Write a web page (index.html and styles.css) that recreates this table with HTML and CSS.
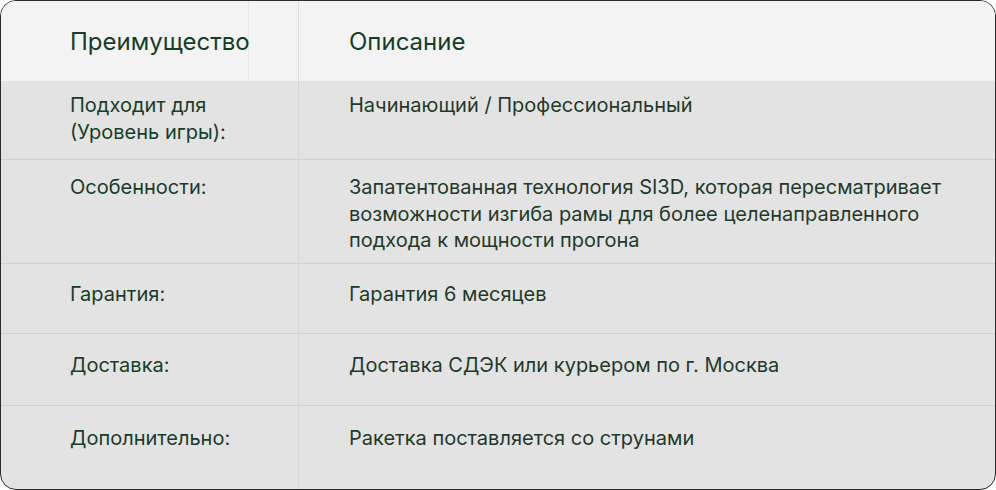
FILE: index.html
```html
<!DOCTYPE html>
<html lang="ru">
<head>
<meta charset="utf-8">
<link rel="stylesheet" href="styles.css">
</head>
<body>
<div class="card">
  <div class="head">
    <div class="th th-first"><div class="th-inner">Преимущество</div></div>
    <div class="th th-second">Описание</div>
  </div>
  <div class="row r1">
    <div class="cell label">Подходит для<br>(Уровень игры):</div>
    <div class="cell desc">Начинающий / Профессиональный</div>
  </div>
  <div class="row r2">
    <div class="cell label">Особенности:</div>
    <div class="cell desc">Запатентованная технология SI3D, которая пересматривает возможности изгиба рамы для более целенаправленного подхода к мощности прогона</div>
  </div>
  <div class="row r3">
    <div class="cell label">Гарантия:</div>
    <div class="cell desc">Гарантия 6 месяцев</div>
  </div>
  <div class="row r4">
    <div class="cell label">Доставка:</div>
    <div class="cell desc">Доставка СДЭК или курьером по г. Москва</div>
  </div>
  <div class="row r5">
    <div class="cell label">Дополнительно:</div>
    <div class="cell desc">Ракетка поставляется со струнами</div>
  </div>
</div>
</body>
</html>
```

FILE: styles.css
```css
* { box-sizing: border-box; }
html, body { margin: 0; padding: 0; background: #ffffff; }
body {
  font-family: Inter, "Noto Sans", "Liberation Sans", sans-serif;
  color: #1c3a28;
}
.card {
  width: 996px;
  height: 490px;
  border: 1px solid #2b2b2b;
  border-radius: 16px;
  overflow: hidden;
  background: #e3e3e3;
  display: flex;
  flex-direction: column;
}
.head {
  display: grid;
  grid-template-columns: 298px 1fr;
  height: 80px;
  background: #f3f3f3;
  font-size: 24px;
  font-weight: 400;
  color: #163d27;
}
.th { display: flex; align-items: center; height: 100%; }
.th-first { border-right: 1px solid #dcdcdc; }
.th-inner {
  width: 248px;
  height: 100%;
  padding-left: 69px;
  border-right: 1px solid #e6e6e6;
  display: flex;
  align-items: center;
  white-space: nowrap;
}
.th-second { padding-left: 50px; }
.row {
  display: grid;
  grid-template-columns: 298px 1fr;
  border-bottom: 1px solid #d0d0d0;
  font-size: 20px;
  line-height: 26.5px;
}
.row:last-child { border-bottom: none; flex: 1; }
.cell { height: 100%; }
.label {
  padding-left: 69px;
  border-right: 1px solid #d4d4d4;
  color: #173d28;
}
.desc {
  padding-left: 50px;
  max-width: 670px;
  color: #1f3a29;
}
.r1 { height: 79px; }
.r1 .cell { padding-top: 11px; }
.r2 { height: 104px; }
.r2 .cell { padding-top: 14px; }
.r3 { height: 70px; }
.r3 .cell { padding-top: 17px; }
.r4 { height: 72px; }
.r4 .cell { padding-top: 18px; }
.r5 .cell { padding-top: 19px; }
```
